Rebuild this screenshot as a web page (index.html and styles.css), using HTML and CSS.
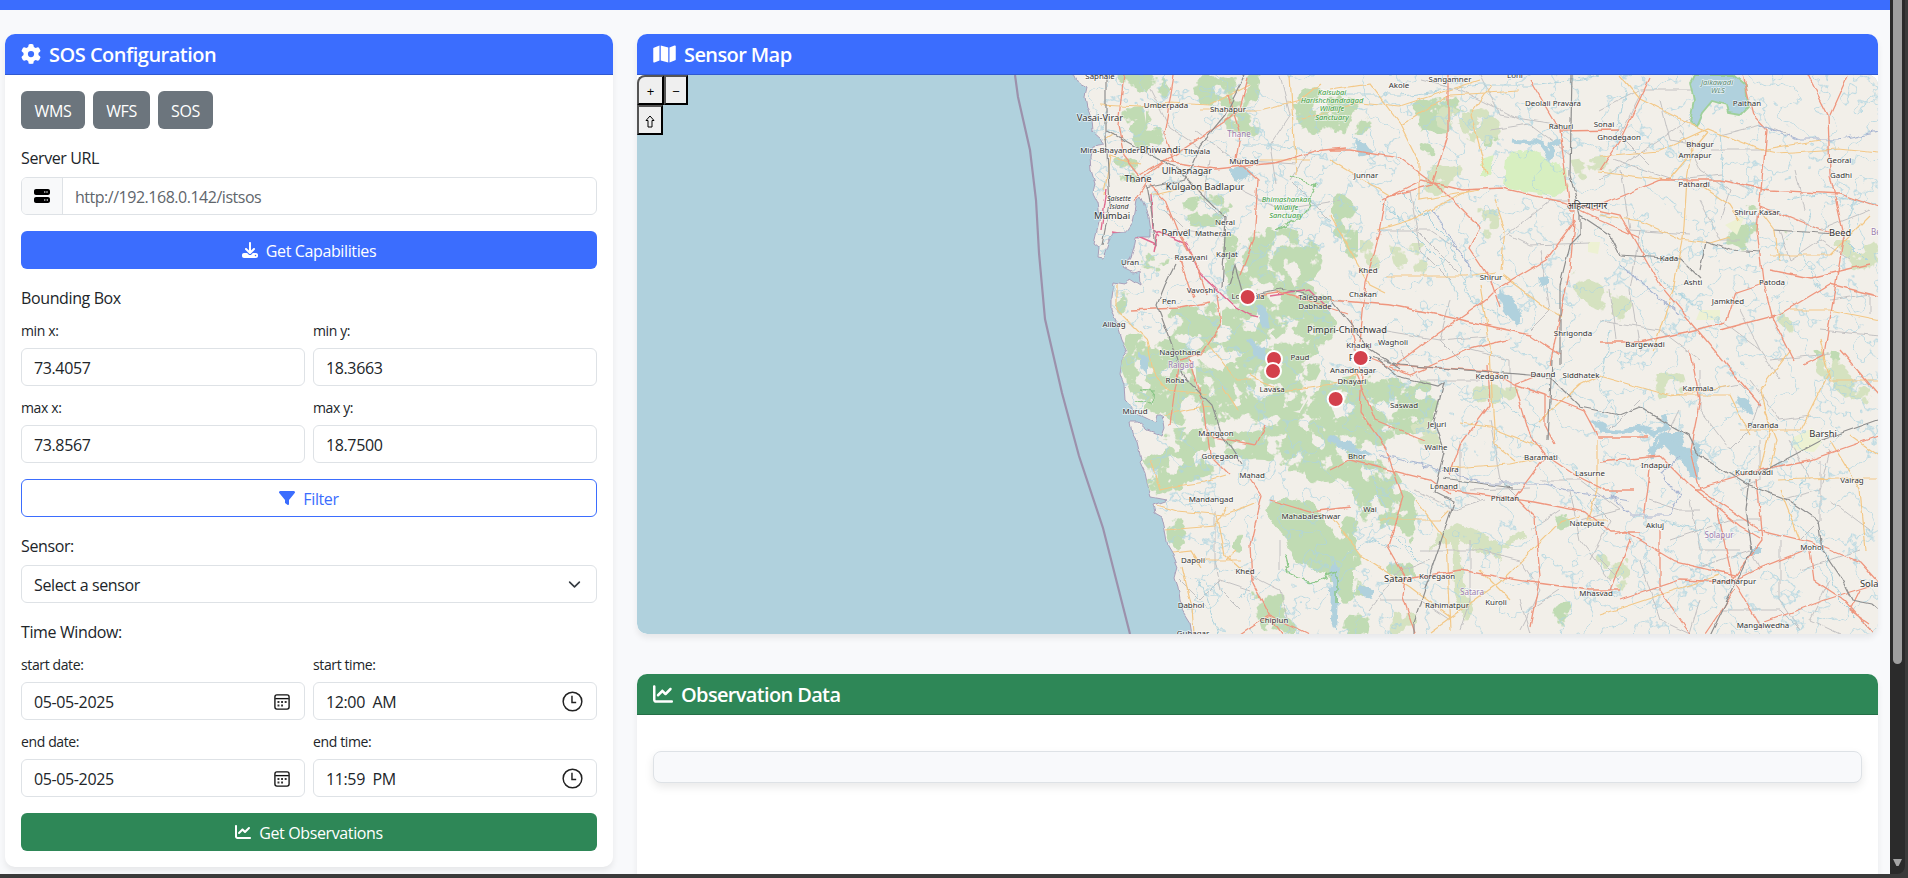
FILE: index.html
```html
<!DOCTYPE html>
<html lang="en">
<head>
<meta charset="utf-8">
<title>Sensor Observation Service</title>
<link rel="stylesheet" href="styles.css">
</head>
<body>
<svg class="defs" width="0" height="0" aria-hidden="true">
  <symbol id="i-chart" viewBox="0 0 512 512"><path d="M64 64c0-17.700-14.300-32-32-32S0 46.300 0 64V400c0 44.200 35.800 80 80 80H480c17.700 0 32-14.300 32-32s-14.300-32-32-32H80c-8.800 0-16-7.200-16-16V64zm406.600 86.600c12.500-12.500 12.500-32.800 0-45.300s-32.800-12.500-45.300 0L320 210.700l-57.400-57.400c-12.500-12.500-32.800-12.500-45.300 0l-112 112c-12.500 12.500-12.500 32.800 0 45.300s32.800 12.500 45.300 0L240 221.300l57.400 57.400c12.500 12.500 32.800 12.500 45.300 0l128-128z"/></symbol>
  <symbol id="i-cal" viewBox="0 0 16 16"><rect x="1.700" y="1.700" width="12.600" height="12.600" rx="1.800" fill="none" stroke="#111" stroke-width="1.200"/><path d="M2 5h12" stroke="#111" stroke-width="1.200"/><path d="M7.200 7.200h1.700v1.700H7.200zM10.400 7.200h1.700v1.700h-1.700zM4 10.300h1.700v1.700H4zM7.200 10.300h1.700v1.700H7.200zM4 7.200h1.700v1.700H4z" fill="#333"/></symbol>
  <symbol id="i-clock" viewBox="0 0 20 20"><circle cx="10" cy="10" r="8.900" fill="none" stroke="#222" stroke-width="1.400"/><path d="M9.500 4.500v6.500h4" fill="none" stroke="#222" stroke-width="1.400"/></symbol>
</svg>
<div class="screen">
  <div class="page">
    <div class="topbar"></div>
    <main class="columns">
      <section class="card config">
        <h5 class="head blue"><svg class="ic20" viewBox="0 0 512 512"><path d="M495.900 166.600c3.200 8.700 .5 18.400-6.400 24.600l-43.300 39.400c1.100 8.300 1.700 16.800 1.700 25.400s-.6 17.100-1.700 25.400l43.300 39.400c6.900 6.200 9.600 15.900 6.400 24.600c-4.400 11.900-9.700 23.300-15.800 34.300l-4.700 8.100c-6.600 11-14 21.400-22.100 31.200c-5.900 7.200-15.700 9.600-24.500 6.800l-55.700-17.700c-13.400 10.300-28.200 18.900-44 25.400l-12.500 57.100c-2 9.100-9 16.300-18.200 17.800c-13.800 2.300-28 3.500-42.500 3.500s-28.700-1.200-42.500-3.500c-9.200-1.500-16.200-8.700-18.200-17.800l-12.500-57.100c-15.800-6.500-30.600-15.100-44-25.400L83.100 425.900c-8.800 2.800-18.600 .3-24.500-6.800c-8.100-9.800-15.500-20.200-22.100-31.200l-4.700-8.100c-6.100-11-11.400-22.400-15.800-34.300c-3.200-8.700-.5-18.400 6.400-24.600l43.300-39.400C64.600 273.100 64 264.600 64 256s.6-17.100 1.700-25.400L22.400 191.200c-6.900-6.200-9.600-15.900-6.400-24.600c4.400-11.900 9.700-23.300 15.800-34.300l4.700-8.100c6.600-11 14-21.400 22.100-31.200c5.900-7.200 15.700-9.600 24.500-6.800l55.700 17.700c13.400-10.300 28.200-18.900 44-25.400l12.500-57.100c2-9.100 9-16.300 18.200-17.800C227.300 1.200 241.500 0 256 0s28.700 1.200 42.500 3.500c9.200 1.500 16.200 8.700 18.200 17.800l12.500 57.100c15.800 6.500 30.600 15.100 44 25.400l55.700-17.700c8.800-2.800 18.600-.3 24.500 6.800c8.100 9.800 15.500 20.200 22.100 31.200l4.700 8.100c6.100 11 11.400 22.400 15.800 34.300zM256 336a80 80 0 1 0 0-160 80 80 0 1 0 0 160z"/></svg>SOS Configuration</h5>
        <div class="body">
          <div class="services"><button class="btn grey w1">WMS</button><button class="btn grey w2">WFS</button><button class="btn grey w3">SOS</button></div>
          <div class="label">Server URL</div>
          <div class="field url"><span class="addon"><svg class="ic16" viewBox="0 0 512 512"><path d="M64 32C28.700 32 0 60.700 0 96v64c0 35.300 28.700 64 64 64H448c35.300 0 64-28.700 64-64V96c0-35.300-28.700-64-64-64H64zm280 72a24 24 0 1 1 0 48 24 24 0 1 1 0-48zm48 24a24 24 0 1 1 48 0 24 24 0 1 1 -48 0zM64 288c-35.300 0-64 28.700-64 64v64c0 35.300 28.700 64 64 64H448c35.300 0 64-28.700 64-64V352c0-35.300-28.700-64-64-64H64zm280 72a24 24 0 1 1 0 48 24 24 0 1 1 0-48zm56 24a24 24 0 1 1 48 0 24 24 0 1 1 -48 0z"/></svg></span><span class="hint">http://192.168.0.142/istsos</span></div>
          <button class="btn blue wide"><svg class="ic16" viewBox="0 0 512 512"><path d="M288 32c0-17.700-14.300-32-32-32s-32 14.300-32 32V274.700l-73.400-73.400c-12.500-12.500-32.800-12.500-45.300 0s-12.500 32.800 0 45.300l128 128c12.500 12.500 32.800 12.500 45.300 0l128-128c12.500-12.500 12.500-32.800 0-45.300s-32.800-12.500-45.300 0L288 274.700V32zM64 352c-35.300 0-64 28.700-64 64v32c0 35.300 28.700 64 64 64H448c35.300 0 64-28.700 64-64V416c0-35.300-28.700-64-64-64H346.500l-45.300 45.300c-25 25-65.500 25-90.500 0L165.500 352H64zm368 56a24 24 0 1 1 0 48 24 24 0 1 1 0-48z"/></svg>Get Capabilities</button>
          <div class="label">Bounding Box</div>
          <div class="grid">
            <div><div class="small">min x:</div><div class="field">73.4057</div></div>
            <div><div class="small">min y:</div><div class="field">18.3663</div></div>
            <div><div class="small">max x:</div><div class="field">73.8567</div></div>
            <div><div class="small">max y:</div><div class="field">18.7500</div></div>
          </div>
          <button class="btn outline wide"><svg class="ic16" viewBox="0 0 512 512"><path d="M3.900 54.900C10.500 40.900 24.500 32 40 32H472c15.500 0 29.500 8.900 36.100 22.900s4.600 30.500-5.200 42.500L320 320.900V448c0 12.100-6.800 23.200-17.700 28.600s-23.800 4.300-33.500-3l-64-48c-8.100-6-12.800-15.500-12.800-25.600V320.900L9 97.300C-.7 85.400-2.800 68.800 3.900 54.900z"/></svg>Filter</button>
          <div class="label">Sensor:</div>
          <div class="field">Select a sensor<svg class="chev" viewBox="0 0 16 16"><path d="M2 5l6 6 6-6" fill="none" stroke="#343a40" stroke-width="2" stroke-linecap="round" stroke-linejoin="round"/></svg></div>
          <div class="label time">Time Window:</div>
          <div class="grid">
            <div><div class="small">start date:</div><div class="field">05-05-2025<svg class="cal"><use href="#i-cal"/></svg></div></div>
            <div><div class="small">start time:</div><div class="field">12:00&nbsp; AM<svg class="clock"><use href="#i-clock"/></svg></div></div>
            <div><div class="small">end date:</div><div class="field">05-05-2025<svg class="cal"><use href="#i-cal"/></svg></div></div>
            <div><div class="small">end time:</div><div class="field">11:59&nbsp; PM<svg class="clock"><use href="#i-clock"/></svg></div></div>
          </div>
          <button class="btn green wide"><svg class="ic16"><use href="#i-chart"/></svg>Get Observations</button>
        </div>
      </section>
      <div class="right">
        <section class="card map">
          <h5 class="head blue"><svg class="icmap" viewBox="0 0 576 512"><path d="M384 476.100L192 421.200V35.900L384 90.800V476.100zm32-1.200V88.400L543.100 37.500c15.800-6.300 32.900 5.300 32.900 22.300V394.600c0 9.800-6 18.600-15.100 22.300L416 474.800zM15.100 95.100L160 37.200V423.600L32.900 474.500C17.100 480.800 0 469.200 0 452.200V117.400c0-9.800 6-18.600 15.100-22.300z"/></svg>Sensor Map</h5>
          <div class="mapview">
<svg class="tiles" viewBox="637 75 1241 559" width="1241" height="559">
  <defs>
    <filter id="woods" x="1050" y="60" width="840" height="590" filterUnits="userSpaceOnUse" color-interpolation-filters="sRGB">
      <feGaussianBlur in="SourceAlpha" stdDeviation="4" result="b"/>
      <feTurbulence type="fractalNoise" baseFrequency=".06" numOctaves="4" seed="8"/>
      <feColorMatrix values="0 0 0 0 0 0 0 0 0 0 0 0 0 0 0 1 0 0 0 0" result="n"/>
      <feComposite in="b" in2="n" operator="arithmetic" k2="1" k3="1.900" k4="-1.560"/>
      <feComponentTransfer result="m"><feFuncA type="linear" slope="9" intercept="-1.500"/></feComponentTransfer>
      <feComposite in="SourceGraphic" in2="m" operator="in"/>
    </filter>
    <filter id="rough" x="1040" y="60" width="850" height="590" filterUnits="userSpaceOnUse">
      <feTurbulence type="fractalNoise" baseFrequency=".09" numOctaves="3" seed="3"/>
      <feDisplacementMap in="SourceGraphic" scale="9" xChannelSelector="R" yChannelSelector="G"/>
    </filter>
    <filter id="wiggle" x="1040" y="60" width="850" height="590" filterUnits="userSpaceOnUse">
      <feTurbulence type="fractalNoise" baseFrequency=".07" numOctaves="2" seed="14"/>
      <feDisplacementMap in="SourceGraphic" scale="5" xChannelSelector="R" yChannelSelector="G"/>
    </filter>
    <filter id="streams" x="1050" y="60" width="840" height="590" filterUnits="userSpaceOnUse" color-interpolation-filters="sRGB">
      <feTurbulence type="fractalNoise" baseFrequency=".028" numOctaves="4" seed="21"/>
      <feColorMatrix values="0 0 0 0 .68 0 0 0 0 .83 0 0 0 0 .88 1 0 0 0 0"/>
      <feComponentTransfer><feFuncA type="table" tableValues="0 0 0 0 0 0 0 0 0 0 0 0 0 0 0 0 0 0 0 0 0 0 0 0 0 0 .75 0 0 0 0 0 0 0 0 0 0 0 0 0 0 0 0 0 0 0 0 0 0 0 0 0 0 0 0"/></feComponentTransfer>
      <feComposite in2="SourceAlpha" operator="in"/>
    </filter>
    <path id="land" d="M1074 75 1078 83 1087 88 1085 97 1087 107 1092 120 1093 132 1100 138 1105 145 1092 147 1090 157 1091 170 1095 183 1093 193 1098 203 1100 217 1097 230 1094 243 1099 247 1098 257 1103 258 1108 243 1113 233 1127 232 1133 223 1137 200 1140 196 1143 203 1148 217 1150 230 1150 237 1135 237 1133 247 1130 257 1123 267 1133 272 1140 270 1141 285 1130 278 1125 285 1113 283 1111 297 1111 310 1117 323 1122 340 1128 352 1122 360 1120 373 1124 385 1125 400 1128 403 1135 413 1155 423 1157 415 1163 415 1165 427 1162 435 1147 430 1138 422 1130 422 1132 433 1138 443 1142 460 1140 462 1145 473 1148 487 1151 497 1167 500 1153 505 1155 513 1162 517 1165 530 1168 547 1174 557 1178 567 1175 578 1178 587 1180 600 1182 610 1190 623 1193 640H1890V60H1074z"/>
    <clipPath id="onland"><use href="#land"/></clipPath>
  </defs>
  <rect x="637" y="75" width="1241" height="559" fill="#b0d1dd"/>
  <path d="M1015 75 1018 97 1030 150 1036 200 1039 253 1045 319 1062 393 1079 456 1103 528 1130 634" fill="none" stroke="#9c91ac" stroke-width="2.200"/>
  <g filter="url(#wiggle)"><use href="#land" fill="#f2efe9" stroke="#a99fb9" stroke-width="1"/></g>
  <g clip-path="url(#onland)">
    <g fill="#c0dbb3" filter="url(#woods)">
      <path d="M1112 72h58v32l-12-6-30-2zM1190 72h75l-10 38-65-6zM1115 108l28-2 8 45-18-4zM1113 155l30 3-4 28-22 6zM1146 108l16 8 2 30-18-4zM1220 112h42v26h-38zM1285 90l55-5 8 45-40 10-25-30zM1180 200l40-10 16 20-24 20-30-6zM1220 235l60-10 45 15-5 40-90 10zM1140 250l30 8-6 20-22-8z"/>
      <path d="M1115 285l16 4-3 26-13 2zM1164 308l56-8 2 50-36 8-20-22zM1222 262l48 0 60 34 10 38-40 76-42 12-34-20-2-62zM1124 330l64 14 12 60-18 22-44-14-18-46zM1195 355l50 30 0 45-46-2zM1160 430l52-6 8 52-56 4zM1225 430l60-20 50 10 30 50-40 20-60-30-44-2z"/>
      <path d="M1140 455l60-6 0 36-52 18zM1160 510l40 15-20 28-16-10zM1225 530l18 5 8 22-20-4zM1250 590l40 0 10 44-40 0zM1320 380l60-8 60 12 0 50-70 14-60 4-10-40zM1330 460l60-4 40 60-60 20zM1338 500l20 20 14 120-30 0zM1380 560l36 0 0 20-30 0zM1395 500l14 0 10 45-18 0z"/>
      <path d="M1410 100l30-8 30 8 40 40-10 14-40-20-40 0zM1412 135l30 10 0 22-20 0zM1330 180l28 20 0 70-28-30zM1738 203l26-2-4 14-20-2zM1714 226l50-8-10 22-32 6zM1720 230l44 14-24 8zM1550 610l24-16-4 32-16 8zM1330 90l28 5 20 40-40 0zM1550 508l22 0-2 24-18 0zM1780 230h16v12h-16zM1798 342l50 10-20 20z"/>
    </g>
    <path d="M1265 510l18-12 30 4 20 30 20 20 0 30-10 18-16-26-30-12-16-30z" fill="#c0dbb3" filter="url(#rough)"/>
    <g fill="#d5e2c0" filter="url(#woods)">
      <path d="M1430 105l60 0 20 36-30 4-46-20zM1420 160l50 6-30 34-20-10zM1570 160l44-6 0 24-34 8zM1388 243l40 0 0 34-32-4zM1478 203l26 8-10 30-18-6zM1565 262l75 40-20 20-46-24zM1468 386l60-4-20 24-40 2zM1403 418l40 0 0 34-26-8z"/>
      <path d="M1590 550l40 10 0 40-20-20zM1648 375l34-6 8 26-30 6zM1600 286l30 20-20 24-20-34zM1745 290l44 18 10 34-38-36zM1830 240l50 0 0 40-30-10zM1820 345l60 50-20 16-50-44zM1598 556l32 0 0 34-26-16zM1360 240l22 0 0 30-22-4zM1393 606l34 6-24 26-16 0z"/>
    </g>
    <path d="M1430 553l8-20 20-10 22 8 20 14 24-16 2 10-22 8-4 12-26-10-16-10 6 50 10 20-8 12-12-30-2-50-18 6z" fill="#d5e2c0" filter="url(#rough)"/>
    <path d="M1506 155l28-5 6 4 14 10 12 4 2 20-14 8-30-4-20-4zM1480 160l14-4-4 20-10 0z" fill="#d7efc0" filter="url(#rough)"/>
    <path d="M1792 438l20-10 10 14-8 10-20-2zM1700 310h20v10h-24zM1588 242h12l-2 12-10-2zM1725 225l20-10-8 20z" fill="#edf1d3"/>
    <g fill="none" stroke="#c3c2c3" stroke-width="1" filter="url(#wiggle)">
      <path d="M1150 88l20 40 30 20M1195 130l40 30 60 4M1165 210l20 20 40 6M1210 160l-6 40 20 20M1280 75l10 40-20 30 6 40M1310 150l-20 30 40 40M1240 190l40 20 60-10M1420 80l40 10 60 30M1480 75l20 40 60 10M1490 130l40-6 40 30M1380 230l50 0 30 20M1410 190l10 60 30 30M1418 232l40 40M1500 240l50-40 20 0M1510 235l20 10 60-2M1540 250l10 60-20 20M1450 300l-10 40 20 20M1380 330l60 10 50-4M1470 350l40 10 0 30M1400 350l20 30 60 0"/>
      <path d="M1600 110l40-20 60 0 0 20-40 30-60 40M1640 95l-20 40 30 30M1660 100l10 40 30 6M1680 130l20 40 30 20-10 30M1710 150l60 0M1720 135l40-10 30 10M1612 160l60 20 50-6M1620 170l10 60 60 4M1640 230l-10 60 10 60M1700 200l20 40 20 0M1730 180l20 10M1720 320l40 30 20 30M1740 310l20 40M1800 220l20 10 50-20M1780 230l10 30 30-20 30 20M1830 300l40-6 0 20M1820 330l60 6M1795 170l10 40M1600 320l60 10 40 30M1610 290l6 50"/>
      <path d="M1460 440l0 50 20 10M1470 490l60-2M1415 490l40 20 30-10M1490 420l10 60 20 20M1540 480l40 0 40 30M1570 490l10 50 30 40M1590 500l20 20-20 40M1580 520l40-10M1470 540l0 60-10 30M1480 550l40 10 20 30-20 40M1430 560l-30 10-30 40M1380 600l40 0 30 20M1520 600l10 34M1560 590l-30 20M1600 560l20 20M1420 550l60 0M1530 530l30-20M1180 580l20 20 20-20 30 10M1215 560l6 30 20 20M1240 570l40 20 10 40M1215 510l0 60M1280 540l0 30"/>
      <path d="M1700 370l0 40 30 40 20-20 10-30M1710 390l30-6 20 20M1680 410l-20 40M1760 440l0 40-20 10M1780 500l40-10 10-40M1820 460l0 60-20 20M1830 500l40 30M1690 500l10 50 40 0M1690 570l60-20 10 20M1640 560l20 60 30 14M1780 540l0 60 20 30M1800 570l60-20M1830 580l-20 40 30 14M1700 600l-10 34M1720 610l60 0 20 20M1640 400l-30 30M1750 380l30 40 30-4M1770 360l60-6M1650 500l30 10 20 0M1670 540l60-20 30 0M1790 440l20 40"/>
    </g>
    <use href="#land" filter="url(#streams)"/>
    <g fill="none" stroke="#b0d4de" stroke-width="1" filter="url(#rough)"><path d="M1340 95l60 0 80-10 60 0 60-10M1400 190l50 50 20 60 40 20M1380 200l60 60 20 40M1240 145l40 0 40 10M1330 440l40 30 20 60 30 30M1340 560l30-20 30 10M1240 600l20-30M1200 580l20 60M1610 330l-10 60 20 30M1545 450l40 60M1460 400l40 0 40 30M1640 240l20 40 40 30M1786 200l30-6 60 10M1810 210l-10 40 20 40M1855 200l-10 40 20 20M1660 520l40 10 0 30 30 20M1810 460l-20 60 30 20 20 60 30 30M1625 90l-10 60M1720 130l4 60"/></g>
    <g fill="#b0d1dd" filter="url(#rough)">
      <path d="M1353 137l12 6 8 10-12 4zM1740 394l10 8 4 12-8-2-10-10zM1500 290l12 8 8 12-2 16-12-14-8-16zM1228 170l16-4 10 8-18 8zM1256 305l10 4 4 20-8-2-6-16zM1248 340l16 8 4 12-14-4zM1140 350l8 12 0 14-8-14zM1330 435l32 14 8 4-10 4-32-16zM1332 560l8 10-4 60-6-10zM1360 585l14 4-4 10-10-6zM1538 278l10-2 0 8-8 2zM1753 546h8v8h-8z"/>
      <path d="M1666 432l16 0 6 22 14-4-6 14 4 16-10-2-6-14-16-14-12-12z"/>
    </g>
    <g fill="none" stroke="#b0d1dd" stroke-width="5" stroke-linejoin="round" filter="url(#rough)">
      <path d="M1600 430l20 2 18-4 16 6 14-8-6-10M1658 438l-8 14M1664 442l-14 14M1512 140l22 2 14 6M1540 144l10 14 2-14 8-4M1592 420l14 8M1672 436l20 20M1676 460l16-4 6-12" />
    </g>
    <path d="M1694 75h40l12 10 2 22-8 8-12-2-2-8-14-4-10 12-6 14-6-6 4-22-4-16z" fill="#b0d1dd" stroke="#9fd09a" stroke-width="1.800" filter="url(#wiggle)"/>
    <g fill="none" stroke="#e06a8f" stroke-width="1.400" filter="url(#wiggle)"><path d="M1107 190l-6 40M1112 232l26 4 18 8-2 8 4-20 14 5 14 6 14 30 36 34 14 8 8 2M1270 296l40-6 20 20M1150 195l2 34 8 8"/></g>
    <g fill="none" stroke="#f3c887" stroke-width="1.200" filter="url(#wiggle)">
      <path d="M1100 105l40 2 30-4 40 2 40-20M1105 140l10-6 M1200 110l60 0 40-10 20-16M1260 160l50 0M1140 165l-30-10-6 40M1150 195l34-8 20 4M1290 75l6 100M1300 120l60-18 40 4 80-26"/>
      <path d="M1117 285l0 25 30 30 6 30 14 20 40 4M1206 340l30 40 16 0M1222 385l16 25M1165 415l24-6 24-2M1250 375l30 16 60-8 20-12M1150 460l10 30 16-4 30-4 20-6M1156 505l20 6 50 4 30-12M1165 530l50-4 12-18M1172 553l20-2 10 16M1195 560l40 0 6 0M1210 560l16 0 10-10M1217 515l8 40 18 16M1182 567l10 40 2 26"/>
      <path d="M1330 90l40-6 30 40 20 40 0 36 60-10M1400 125l50-30 70-4M1330 160l60 36M1386 276l80 0 30-4M1487 175l-16-60 20-30M1495 200l10 30-4 40M1502 275l40 30 20 12M1480 285l10 60 2 50 3 50 20 16M1378 230l32-10 60-30M1330 215l40 70 16 8"/>
      <path d="M1460 423l30 4 50 20M1450 468l60-4 30-6M1380 520l60 0 10-10M1430 632l70-50 60-60 20-6 M1480 570l30 30M1600 375l-20 10-40 36M1597 440l0 50-10 30 20 0M1330 515l30 40 50 32 40 30M1416 500l30 40 4 90M1670 395l60 0 20 40"/>
      <path d="M1600 156l60-5 48-22 50 20 20 4 60-4 40 4M1620 75l20 24 60 30 8 3M1708 132l-40 48-70-8M1693 140l-6 40-4 60-10 50-20 60M1700 185l30 20 10 16M1763 215l12 16 4 30M1770 255l60 0 40-40M1790 310l40 0 50 10M1600 215l40 6 40 18 30 4 20-6M1790 350l-30 40 10 40-10 40M1830 370l-30 60-60 0M1600 376l70 20 60-10M1777 480l60-2 40 0M1780 490l20 50 M1600 615l60-20 60-20M1830 440l30 50 6 60M1850 435l28 20M1764 410l12 30-6 30M1820 340l10 40 50 0M1760 150l60-10"/>
    </g>
    <g fill="none" stroke="#ef967e" stroke-width="1.300" filter="url(#wiggle)">
      <path d="M1124 75l-6 50 6 30 16 20M1174 75l-10 60 10 28M1140 180l30-22 60-40 10-10 8-30M1228 95l12 40-4 25 22 20-4 60-14 35M1140 175l25-14 50 8 60-6 40-12 30-3M1150 185l15 15 12 30 20 35 10 30M1148 180l-14 22M1130 310l50-2 30-6 M1180 260l10 30 4 8M1217 295l4 30-20 30-22 5M1190 360l14 45 6 50 20 20M1170 425l4-30 6-32M1205 435l50 10 10-20"/>
      <path d="M1247 297l30-5 30 8 40 14M1350 320l6 30 4 20M1362 372l-2 40 25 35 18 50-15 50 17 30-2 20 20 60 M1360 355l50 20 60-26 40-10M1250 478l12 18-12 50 2 35 20 40 10 14M1270 500l40 12 40-5M1240 635l30-20 20 10 20 10"/>
      <path d="M1448 75l0 60-16 50-46 12-6 35-14 50-6 60M1330 150l20 0 50 8 40 30 40 40-10 20 20 30 10 30M1382 200l40-20 40 10M1462 190l40-2 60 14 12 4M1530 80l30 50 10 80 5 0-5 60-15 70-5 25M1330 300l60 5 50 10 90 20 30 20M1396 365l40-30 50-35 10-10 50-30 30-40M1575 205l45 10 40 70 50 60 50 60M1560 131l60-1 M1600 170l20-30 30-62M1580 210l20 10 40 18"/>
      <path d="M1390 365l100 6 24 14 30 10 40 16 14 26 50 0M1330 470l20-10 80 20 20 15M1445 490l90 12 50 10 25 20 30 0M1450 475l10-30 30-40-2-40M1540 375l-25 10 15 50 15 20 30 20 30 15 30 0M1515 385l30 10 0 30 10 20M1545 457l-30 40 20 20 5 60-10 50M1400 580l60-10 70 12 60 8 30 0M1610 590l20-50 M1600 462l60-6 30 30 50 40 20 12M1355 370l20 50 50 20"/>
      <path d="M1600 205l60-25 60 0 50 10 70 4 40 14M1743 75l10 40 14 15-6 60-4 40 6 50 10 40 20 40M1770 270l40 8 60-14M1766 282l-30 10-10 30-40 10-46 10-40 0M1808 75l20 40 2 60 14 60-10 60-10 60-20 10M1830 115l18-40M1760 206l50 20 24 8M1720 330l60-16 50-30 48 12M1690 350l10 50-10 50 10 40-6 0M1700 488l60-18 50-10 68-24M1650 470l-6 50M1615 535l10-4 50 30 60 14M1700 490l60 40 50 12 50 20 18 20M1717 508l16 74M1756 480l6 60-30 40M1735 580l20-10 50-20M1733 580l30 50M1735 590l-30 44M1620 600l60-20 50 2M1810 550l4 30 30 20 30 34M1765 622l60-22 50-16M1860 590l-10 20 20 14M1660 530l0 60 30 44M1840 350l38 44"/>
    </g>
    <g fill="none" stroke="#8f8f8f" stroke-width="1.200" filter="url(#wiggle)">
      <path d="M1106 75l0 60 4 70-8 40M1106 130l50 28 20 10 10 10 40 40-4 70M1245 75l-20 40-25 30-15 35-40 8M1146 185l10 60M1175 265l-10 20-8 20 15 40 10 30 30 30 10 30 20 30M1229 285l6-20 8 30M1240 297l40-8 50 10 40 50 30 20M1370 357l30 8 130 10 20 2M1378 360l20 16 40 10 6-4-10 40 10 30-10 40 20 10-20 60-20 60 0 40M1443 478l70 10"/>
      <path d="M1572 75l-2 100 10 40 0 20-10 10-10 40 0 80M1580 215l30 20 10 20 60 4 20 20M1552 360l-4 80M1550 377l30 30 40 8 20-8 30 18 18 10 10 20 50 30 40 15 30 20 4 30 20 30 10 20 20 4 14 12M1762 472l60-32 56-20M1750 480l-4 30 6 40-20 40-24 50M1700 270l6-28 24 8 30 2M1775 230l60 4"/>
    </g>
    <g fill="none" stroke="#a9b6d2" stroke-width="1.200" filter="url(#rough)"><path d="M1432 210l20 30 20 30M1380 455l60 14 40 14 60 0 40 10 50 8M1610 495l20 20 40 0 10-20-20-20 20-18M1760 125l40 14 40 0 40-8M1620 265l60 50"/></g>
    <g fill="none" stroke="#8fc88b" stroke-width="1.500" filter="url(#rough)"><path d="M1290 175l25 10-10 30-30 14M1285 555l6 20 20 8 26-10 0 30M1140 390l14 2-2 12-16-2"/></g>
  </g>
  <g class="names">
    <g class="m">
      <text x="1100" y="79">Saphale</text><text x="1166" y="108">Umberpada</text><text x="1228" y="112">Shahapur</text><text x="1110" y="153">Mira-Bhayander</text><text x="1197" y="154">Titwala</text><text x="1244" y="164">Murbad</text><text x="1225" y="225">Neral</text><text x="1213" y="236">Matheran</text><text x="1227" y="257">Karjat</text><text x="1191" y="260">Rasayani</text><text x="1130" y="265">Uran</text><text x="1201" y="293">Vavoshi</text><text x="1248" y="299">Lonavala</text><text x="1169" y="304">Pen</text><text x="1114" y="327">Alibag</text><text x="1315" y="300">Talegaon</text><text x="1315" y="309">Dabhade</text><text x="1180" y="355">Nagothane</text><text x="1300" y="360">Paud</text><text x="1175" y="383">Roha</text><text x="1272" y="392">Lavasa</text><text x="1135" y="414">Murud</text><text x="1216" y="436">Mangaon</text><text x="1220" y="459">Goregaon</text><text x="1252" y="478">Mahad</text><text x="1211" y="502">Mandangad</text><text x="1311" y="519">Mahabaleshwar</text><text x="1193" y="563">Dapoli</text><text x="1245" y="574">Khed</text><text x="1191" y="608">Dabhol</text><text x="1274" y="623">Chiplun</text><text x="1193" y="636">Guhagar</text>
      <text x="1399" y="88">Akole</text><text x="1450" y="82">Sangamner</text><text x="1515" y="78">Loni</text><text x="1553" y="106">Deolali Pravara</text><text x="1561" y="129">Rahuri</text><text x="1604" y="127">Sonai</text><text x="1619" y="140">Ghodegaon</text><text x="1366" y="178">Junnar</text><text x="1368" y="273">Khed</text><text x="1363" y="297">Chakan</text><text x="1491" y="280">Shirur</text><text x="1573" y="336">Shrigonda</text><text x="1359" y="348">Khadki</text><text x="1393" y="345">Wagholi</text><text x="1353" y="373">Anandnagar</text><text x="1352" y="384">Dhayari</text><text x="1492" y="379">Kedgaon</text><text x="1543" y="377">Daund</text><text x="1581" y="378">Siddhatek</text><text x="1404" y="408">Saswad</text><text x="1437" y="427">Jejuri</text><text x="1436" y="450">Walhe</text><text x="1357" y="459">Bhor</text><text x="1451" y="472">Nira</text><text x="1541" y="460">Baramati</text><text x="1590" y="476">Lasurne</text><text x="1444" y="489">Lonand</text><text x="1505" y="501">Phaltan</text><text x="1370" y="512">Wai</text><text x="1587" y="526">Natepute</text><text x="1437" y="579">Koregaon</text><text x="1447" y="608">Rahimatpur</text><text x="1496" y="605">Kuroli</text><text x="1596" y="596">Mhasvad</text>
      <text x="1747" y="106">Paithan</text><text x="1700" y="147">Bhagur</text><text x="1695" y="158">Amrapur</text><text x="1839" y="163">Georai</text><text x="1841" y="178">Gadhi</text><text x="1694" y="187">Pathardi</text><text x="1757" y="215">Shirur Kasar</text><text x="1669" y="261">Kada</text><text x="1693" y="285">Ashti</text><text x="1772" y="285">Patoda</text><text x="1728" y="304">Jamkhed</text><text x="1645" y="347">Bargewadi</text><text x="1698" y="391">Karmala</text><text x="1763" y="428">Paranda</text><text x="1656" y="468">Indapur</text><text x="1754" y="475">Kurduvadi</text><text x="1852" y="483">Vairag</text><text x="1655" y="528">Akluj</text><text x="1812" y="550">Mohol</text><text x="1734" y="584">Pandharpur</text><text x="1763" y="628">Mangalwedha</text>
    </g>
    <g class="l"><text x="1100" y="121">Vasai-Virar</text><text x="1160" y="153">Bhiwandi</text><text x="1187" y="174">Ulhasnagar</text><text x="1138" y="182">Thane</text><text x="1205" y="190">Kulgaon Badlapur</text><text x="1112" y="219">Mumbai</text><text x="1176" y="236">Panvel</text><text x="1347" y="333">Pimpri-Chinchwad</text><text x="1360" y="361">Pune</text><text x="1398" y="582">Satara</text><text x="1840" y="236">Beed</text><text x="1823" y="437">Barshi</text><text x="1860" y="587" class="start">Solapur</text><text x="1587" y="209">अहिल्यानगर</text></g>
    <g class="p"><text x="1239" y="137">Thane</text><text x="1181" y="368">Raigad</text><text x="1472" y="595">Satara</text><text x="1719" y="538">Solapur</text><text x="1871" y="235" class="start">Beed</text></g>
    <g class="g"><text x="1332" y="95">Kalsubai</text><text x="1332" y="103">Harishchandragad</text><text x="1332" y="111">Wildlife</text><text x="1332" y="120">Sanctuary</text><text x="1286" y="202">Bhimashankar</text><text x="1286" y="210">Wildlife</text><text x="1286" y="218">Sanctuary</text></g>
    <g class="g dim"><text x="1717" y="85">Jaikawadi</text><text x="1718" y="93">WLS</text></g>
    <g class="i"><text x="1119" y="201">Salsette</text><text x="1119" y="209">Island</text></g>
  </g>
  <g class="pins"><circle cx="1247.700" cy="297" r="8"/><circle cx="1274" cy="359" r="8"/><circle cx="1273" cy="371" r="8"/><circle cx="1360.700" cy="358" r="8"/><circle cx="1335.700" cy="399" r="8"/></g>
</svg>
            <div class="controls"><div><button class="zin">+</button><button class="zout">−</button></div><button class="north" aria-label="Reset rotation"><svg width="10" height="13" viewBox="0 0 10 13"><path d="M5 1 9 5.500H7V12H3V5.500H1z" fill="none" stroke="#000" stroke-width="1"/></svg></button></div>
          </div>
        </section>
        <section class="card obs">
          <h5 class="head green"><svg class="ic20"><use href="#i-chart"/></svg>Observation Data</h5>
          <div class="body"><div class="panel"></div></div>
        </section>
      </div>
    </main>
  </div>
  <div class="scroll"><div class="thumb"></div><div class="down"></div></div>
</div>
</body>
</html>
```
FILE: styles.css
```css
* { box-sizing: border-box; }
body { margin: 0; background: #3b3b3b; font: 16px/24px "Open Sans", "Noto Sans", sans-serif; letter-spacing: -.38px; color: #212529; overflow: hidden; }
svg { flex: none; }
.defs { position: absolute; }
.screen { display: flex; height: 874px; width: 1905px; overflow: hidden; border-bottom-right-radius: 8px; }
.page { width: 1890px; background: #f8f9fb; overflow: hidden; }
.topbar { height: 10px; background: #3b6dfe; }
.columns { display: flex; gap: 24px; align-items: flex-start; padding: 24px 12px 0 5px; }
.card { background: #fff; border-radius: 10px; box-shadow: 0 4px 6px rgba(0,0,0,.07); overflow: hidden; }
.config { width: 608px; height: 833px; }
.right { width: 1241px; }
.head { display: flex; align-items: center; gap: 8px; height: 41px; margin: 0; padding: 2px 16px 0; color: #fff; font-size: 20px; font-weight: 600; letter-spacing: -.5px; border-bottom: 1px solid rgba(0,0,0,.18); }
.head svg, .btn svg { fill: currentColor; margin-top: -2px; }
.blue { background: #3b6dfe; }
.green { background: #2e8757; }
.ic20 { width: 20px; height: 20px; }
.ic16 { width: 16px; height: 16px; }
.icmap { width: 23px; height: 20px; }
.map .head { letter-spacing: -.6px; }
.obs .head { letter-spacing: -.65px; }
.body { padding: 16px; }
.services { display: flex; gap: 8px; margin-bottom: 16px; }
.btn { display: flex; align-items: center; justify-content: center; gap: 8px; height: 38px; padding: 2px 0 0; border: 0; border-radius: 6px; color: #fff; font: inherit; letter-spacing: inherit; }
.grey { background: #6c757d; }
.w1 { width: 64px; }
.w2 { width: 57px; }
.w3 { width: 55px; }
.wide { width: 100%; margin: 16px 0; }
.wide:last-child { margin-bottom: 0; }
.outline { background: #fff; color: #3b6dfe; border: 1px solid #3b6dfe; }
.label { height: 24px; margin-bottom: 8px; padding-top: 1px; }
.time { margin-top: 16px; }
.field { display: flex; align-items: center; justify-content: space-between; height: 38px; padding: 1px 12px 0; border: 1px solid #dee2e6; border-radius: 6px; background: #fff; }
.url { justify-content: flex-start; padding: 0; }
.addon { display: flex; align-items: center; justify-content: center; width: 41px; height: 36px; background: #f8f9fa; border-right: 1px solid #dee2e6; border-radius: 5px 0 0 5px; }
.hint { padding: 2px 0 0 12px; color: #5f666c; letter-spacing: -.48px; }
.grid { display: grid; grid-template-columns: 1fr 1fr; gap: 8px; }
.small { font-size: 14px; line-height: 21px; margin: 2px 0 8px; height: 21px; padding-top: 1px; }
.grid > div { min-height: 69px; }
.grid + .wide { margin-top: 16px; }
.chev { width: 13px; height: 13px; margin-right: 3px; }
.cal { width: 18px; height: 18px; margin-right: 1px; }
.clock { width: 21px; height: 21px; margin-right: 1px; }
.mapview { position: relative; height: 559px; }
.tiles { display: block; border-radius: 10px; }
.controls { position: absolute; left: 0; top: 0; display: flex; flex-direction: column; align-items: flex-start; }
.controls > div { display: flex; }
.controls button { display: flex; align-items: center; justify-content: center; height: 30px; padding: 2px 0 0; background: #efefef; border: 2px solid; border-color: #555 #000 #000 #555; color: #000; font: 13.300px "Open Sans", sans-serif; }
.controls .zin { width: 27px; border-top-left-radius: 8px; }
.controls .zout { width: 24px; }
.controls .north { width: 26px; }
.names { font-family: "Noto Sans", sans-serif; letter-spacing: 0; text-anchor: middle; paint-order: stroke; stroke: rgba(255,255,255,.65); stroke-width: 1.5px; fill: #333; }
.m { font-size: 7.900px; }
.l { font-size: 9.300px; }
.p { font-size: 8px; fill: #9a7aac; }
.g { font-size: 7.500px; font-style: italic; fill: #379a3b; }
.dim { fill: #5c8a72; }
.i { font-size: 7px; font-style: italic; }
.start { text-anchor: start; }
.pins { fill: #d3404b; stroke: #fff; stroke-width: 2px; }
.obs { margin-top: 40px; height: 240px; }
.panel { height: 32px; margin-top: 20px; border: 1px solid #dee2e6; border-radius: 8px; background: #f8f9fb; box-shadow: 0 4px 10px rgba(0,0,0,.09); }
.scroll { display: flex; flex-direction: column; align-items: center; justify-content: space-between; width: 15px; padding-bottom: 8px; background: #2b2b2b; }
.thumb { width: 9px; height: 664px; background: #9f9f9f; border-radius: 0 0 5px 5px; }
.down { width: 9px; height: 7px; background: #a5a5a5; clip-path: polygon(0 0, 100% 0, 62% 100%, 38% 100%); }
```
